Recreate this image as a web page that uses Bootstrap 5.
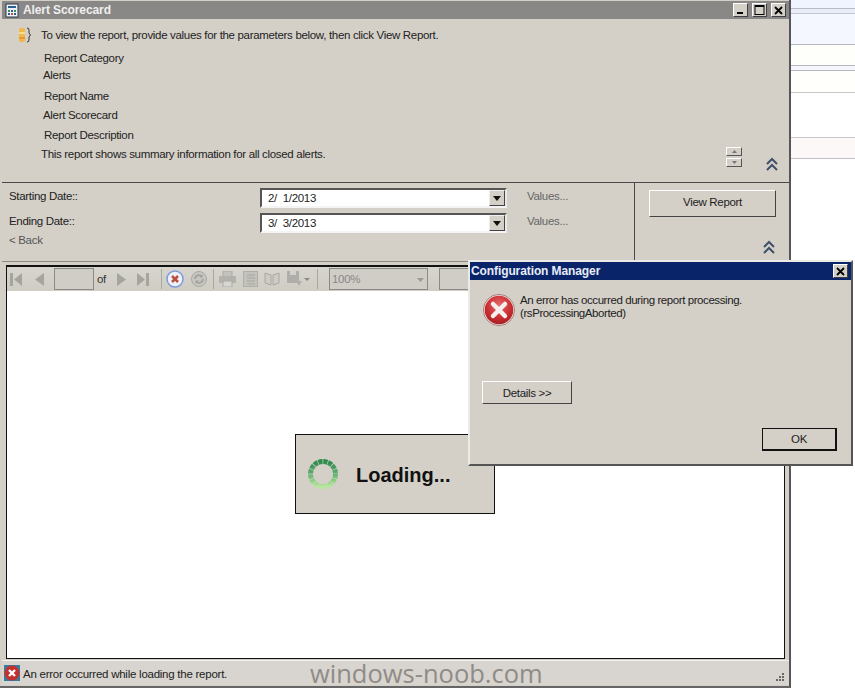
<!DOCTYPE html>
<html lang="en">
<head>
<meta charset="utf-8">
<title>Alert Scorecard</title>
<link href="https://cdn.jsdelivr.net/npm/bootstrap@5.3.0/dist/css/bootstrap.min.css" rel="stylesheet">
<style>
html,body{margin:0;height:689px;overflow:hidden;background:#fff}
body{font-family:"Liberation Sans",Arial,sans-serif;font-size:11.5px;letter-spacing:-.32px;line-height:16px;color:#222}
.stage{position:relative;width:855px;height:689px;overflow:hidden}
.appwin{width:791px;height:688px;background:#d4d0c8;border-right:2px solid #55565a;border-bottom:2px solid #666;padding-left:2px}
.strip{flex:1 1 auto;background:#fff}
.s-a{height:9px;background:#f0f4ff;border-bottom:1px solid #b9bcc4}
.s-b{height:5px;background:#e9edf8;border-bottom:1px solid #c3c6ce}
.s-c{height:31px;background:#f4f7ff;border-bottom:1px solid #b5b8bf}
.s-d{height:21px;background:#fefefb;border-bottom:1px solid #b5b8bf}
.s-e{height:5px;background:#f6f6fc;border-bottom:1px solid #b5b8bf}
.s-f{height:22px;background:#fffffb;border-bottom:1px solid #c8c8cc}
.s-g{height:45px;background:#fff;border-bottom:1px solid #c8c8cc}
.s-h{height:21px;background:#fcf8f8;border-bottom:1px solid #c0c0c6}
.titlebar{height:18px;margin-top:1px;background:#8a8887;color:#eee;font-weight:700;font-size:12px;letter-spacing:-.1px;padding:0 3px 0 3px}
.titletxt{margin-left:3px}
.capbtn{width:15px;height:14px;background:#d4d0c8;border:1px solid;border-color:#fff #404040 #404040 #fff;display:flex;align-items:center;justify-content:center}
.infopanel{height:164px;border-bottom:1px solid #4a4a48;padding-top:8px}
.ln1{margin-left:39px;height:16px;white-space:nowrap}
.ln2{margin-left:42px;height:16px}
.ln3{margin-left:41px;height:16px}
.m7{margin-top:7px}.m1{margin-top:1px}.m5{margin-top:5px}.m3{margin-top:3px}.m4{margin-top:4px}
.infoicon{margin-left:16px;margin-right:7px;vertical-align:top}
.ln1.first{margin-left:0}
.spins{margin-right:24px;margin-top:120px;width:16px}
.spinbtn{display:flex;height:9px;background:#d4d0c8;border:1px solid;border-color:#fff #555 #555 #fff;align-items:center;justify-content:center;margin-bottom:2px}
.chev1{margin-top:130px;margin-right:11px}
.parampanel{height:79px;border-bottom:1px solid #8c8a84}
.paramleft{width:633px;border-right:1px solid #4a4a48;padding:5px 0 0 7px}
.paramrow{height:25px;align-items:flex-start}
.plabel{width:251px}
.dateinput{width:247px;height:20px;background:#fff;border:2px solid;border-color:#555 #e8e8e8 #f4f4f4 #555;padding:0 0 0 6px;position:relative;display:flex;justify-content:space-between;margin-right:20px}
.drop{width:16px;height:16px;background:#d4d0c8;border:1px solid;border-color:#eee #444 #444 #eee;display:flex;align-items:center;justify-content:center;flex:none}
.vals{color:#666}
.back{color:#555;margin-top:-6px}
.paramright{flex:1 1 auto;padding:7px 0 0 14px}
.winbtn{width:127px;height:27px;background:#d4d0c8;border:1px solid;border-color:#fff #444 #444 #fff;line-height:22px;text-align:center;color:#222}
.chev2{margin:23px 0 0 114px;display:block}
.frame{height:394px;margin:3px 4px 0 4px;border:1px solid #111;border-width:2px 1px 1px 1px;background:#fff;display:flex;flex-direction:column}
.tbar{height:24px;background:linear-gradient(#d8d5ce,#cfccc4);display:flex;align-items:center;flex:none;color:#333;padding-left:3px}
.tbar svg{flex:none}
.pg{width:40px;height:22px;background:#d0cdc6;border:1px solid #8a8a86;margin-left:10px}
.ofw{margin-left:3px;width:10px}
.sep{width:1px;height:20px;background:#aaa8a2;flex:none}
.g{margin-left:7px}.g2{margin-left:4px}.g3{margin-left:10px}.g4{margin-left:12px}.g1{margin-left:1px}.g5{margin-left:5px}.g6{margin-left:6px}
.zoomsel{width:99px;height:22px;border:1px solid #8a8a86;background:#d0cdc6;color:#888;padding:2px 0 0 2px;display:flex;justify-content:space-between;margin-left:11px}
.zoomsel svg{margin:7px 3px 0 0}
.findbox{width:60px;height:22px;border:1px solid #8a8a86;background:#d0cdc6;margin-left:11px}
.viewer{flex:1 1 auto;background:#fff}
.statusbar{height:25px;margin-top:1px;border-top:1px solid #f2f0ec;background:#d8d4cf;position:relative;padding-left:2px;color:#222;white-space:nowrap;align-items:center}
.statustxt{margin-left:3px;padding-top:2px;letter-spacing:-.25px}
.wmark{font-family:"Open Sans","Noto Sans",sans-serif;font-size:25.5px;letter-spacing:0;line-height:24px;color:#8f8b86;margin-left:83px}
.grip{margin-left:auto;margin-right:4px;margin-top:8px}
.dialog{position:absolute;left:468px;top:260px;width:385px;height:206px;background:#d4d0c8;border:2px solid;border-color:#eceae6 #555 #555 #eceae6;z-index:2}
.dtitle{height:18px;background:#0a246a;color:#e8ecf8;font-weight:700;font-size:12px;line-height:18px;padding-left:1px;letter-spacing:-.1px;position:relative}
.dclose{position:absolute;right:3px;top:2px;width:15px;height:14px;background:#d4d0c8;border:1px solid;border-color:#fff #404040 #404040 #fff;display:flex;align-items:center;justify-content:center}
.dbody{padding:14px 0 0 13px}
.dmsg{margin-left:5px;line-height:13px;color:#222;letter-spacing:-.42px}
.detbtn{width:90px;height:23px;margin-top:55px;background:#d4d0c8;border:1px solid;border-color:#fff #444 #444 #fff;line-height:23px;text-align:center;margin-left:-1px}
.okbtn{width:75px;height:23px;margin:24px 0 0 279px;background:#d4d0c8;border:1px solid #111;border-right-width:2px;border-bottom-width:2px;line-height:21px;text-align:center}
.loadingbox{position:absolute;left:295px;top:434px;width:200px;height:80px;background:#d4d0c8;border:1px solid #111;padding-left:10px;z-index:1}
.loadtxt{font-size:20px;font-weight:700;letter-spacing:0;color:#111;margin-left:16px;line-height:24px;padding-top:2px}
</style>
</head>
<body>
<div class="stage d-flex">
  <div class="appwin">
    <div class="titlebar d-flex align-items-center">
      <svg width="15" height="15" viewBox="0 0 15 15"><rect x="1" y="1" width="12" height="13" fill="#eef2f6" stroke="#2c3a4a"/><rect x="3" y="3" width="8" height="2" fill="#2b5f8f"/><rect x="3" y="7" width="2" height="2" fill="#3a8a5a"/><rect x="6" y="7" width="2" height="2" fill="#2b5f8f"/><rect x="9" y="7" width="2" height="2" fill="#3a8a5a"/><rect x="3" y="10" width="2" height="2" fill="#2b5f8f"/><rect x="6" y="10" width="2" height="2" fill="#c05040"/><rect x="9" y="10" width="2" height="2" fill="#2b5f8f"/></svg>
      <span class="titletxt flex-grow-1">Alert Scorecard</span>
      <div class="d-flex gap-1 me-0">
        <span class="capbtn"><svg width="9" height="9" viewBox="0 0 9 9"><rect x="1" y="6" width="6" height="2" fill="#000"/></svg></span>
        <span class="capbtn"><svg width="11" height="10" viewBox="0 0 11 10"><rect x="1" y=".5" width="9" height="9" fill="none" stroke="#000"/><rect x="1" y="0" width="9" height="2" fill="#000"/></svg></span>
        <span class="capbtn"><svg width="9" height="9" viewBox="0 0 9 9"><path d="M1 1l7 7M8 1L1 8" stroke="#000" stroke-width="1.8"/></svg></span>
      </div>
    </div>
    <div class="infopanel d-flex">
      <div class="flex-grow-1">
        <div class="ln1 first"><svg class="infoicon" width="16" height="16" viewBox="0 0 16 16"><rect x="1" y="1" width="6" height="14" rx="2" fill="#f0b84a"/><rect x="1" y="5" width="6" height="2" fill="#f7dc90"/><rect x="1" y="10" width="6" height="2" fill="#e89a30"/><path d="M9 1q2 0 2 2v3l1.500 2-1.500 2v3q0 2-2 2" fill="none" stroke="#333"/></svg>To view the report, provide values for the parameters below, then click View Report.</div>
        <div class="ln2 m7">Report Category</div>
        <div class="ln3 m1">Alerts</div>
        <div class="ln2 m5">Report Name</div>
        <div class="ln3 m3">Alert Scorecard</div>
        <div class="ln2 m4">Report Description</div>
        <div class="ln1 m3">This report shows summary information for all closed alerts.</div>
      </div>
      <div class="spins">
        <span class="spinbtn"><svg width="5" height="3" viewBox="0 0 5 3"><path d="M2.500 0L5 3H0z" fill="#777"/></svg></span>
        <span class="spinbtn"><svg width="5" height="3" viewBox="0 0 5 3"><path d="M0 0h5L2.500 3z" fill="#777"/></svg></span>
      </div>
      <svg class="chev1" width="12" height="14" viewBox="0 0 12 14"><path d="M1 7l5-5 5 5M1 13l5-5 5 5" fill="none" stroke="#3f5068" stroke-width="2"/></svg>
    </div>
    <div class="parampanel d-flex">
      <div class="paramleft">
        <div class="paramrow d-flex">
          <div class="plabel">Starting Date::</div>
          <div class="dateinput"><span>2/&nbsp; 1/2013</span><span class="drop"><svg width="8" height="5" viewBox="0 0 8 5"><path d="M0 0h8L4 5z" fill="#111"/></svg></span></div>
          <div class="vals">Values...</div>
        </div>
        <div class="paramrow d-flex">
          <div class="plabel">Ending Date::</div>
          <div class="dateinput"><span>3/&nbsp; 3/2013</span><span class="drop"><svg width="8" height="5" viewBox="0 0 8 5"><path d="M0 0h8L4 5z" fill="#111"/></svg></span></div>
          <div class="vals">Values...</div>
        </div>
        <div class="back">&lt; Back</div>
      </div>
      <div class="paramright">
        <div class="winbtn">View Report</div>
        <svg class="chev2" width="12" height="14" viewBox="0 0 12 14"><path d="M1 7l5-5 5 5M1 13l5-5 5 5" fill="none" stroke="#3f5068" stroke-width="2"/></svg>
      </div>
    </div>
    <div class="frame">
      <div class="tbar">
        <svg width="13" height="13" viewBox="0 0 13 13"><rect x="0" y="0" width="3" height="13" fill="#a5a5a0"/><path d="M12 0v13L4 6.500z" fill="#a5a5a0"/></svg>
        <svg class="g4" width="9" height="13" viewBox="0 0 9 13"><path d="M9 0v13L0 6.500z" fill="#a5a5a0"/></svg>
        <span class="pg"></span>
        <span class="ofw">of</span>
        <svg class="g3" width="9" height="13" viewBox="0 0 9 13"><path d="M0 0v13L9 6.500z" fill="#a5a5a0"/></svg>
        <svg class="g3" width="13" height="13" viewBox="0 0 13 13"><rect x="10" y="0" width="3" height="13" fill="#a5a5a0"/><path d="M1 0v13L9 6.500z" fill="#a5a5a0"/></svg>
        <span class="sep g4"></span>
        <svg class="g2" width="18" height="18" viewBox="0 0 18 18"><circle cx="9" cy="9" r="8" fill="#eef1f8" stroke="#7d9bd8" stroke-width="1.500"/><path d="M6 6l6 6M12 6l-6 6" stroke="#b8503c" stroke-width="2.500"/></svg>
        <svg class="g" width="16" height="16" viewBox="0 0 16 16"><circle cx="8" cy="8" r="7.500" fill="#c8c6c0" stroke="#aaa8a2"/><path d="M4 8a4 4 0 0 1 7-2.500M12 8a4 4 0 0 1-7 2.500" fill="none" stroke="#a4a29c" stroke-width="1.800"/><path d="M11.500 3v3.500H8M4.500 13V9.500H8" fill="#a4a29c"/></svg>
        <span class="sep g6"></span>
        <svg class="g5" width="17" height="16" viewBox="0 0 17 16"><rect x="4" y="0" width="9" height="6" fill="#c4c2bd" stroke="#aaa"/><rect x="0" y="5" width="17" height="7" fill="#b4b2ac"/><rect x="4" y="10" width="9" height="6" fill="#d8d6d0" stroke="#aaa"/></svg>
        <svg class="g" width="15" height="16" viewBox="0 0 15 16"><rect x=".5" y=".5" width="14" height="15" fill="#c4c2bd" stroke="#b0aea8"/><path d="M4 4h8M4 7h8M4 10h8M4 13h8" stroke="#a8a6a0"/></svg>
        <svg class="g6" width="16" height="14" viewBox="0 0 16 14"><path d="M1 1l6 2v10l-6-2zM15 1L9 3v10l6-2z" fill="#cdcbc5" stroke="#aaa8a2"/></svg>
        <svg class="g" width="16" height="16" viewBox="0 0 16 16"><rect x="0" y="0" width="12" height="12" fill="#b0aeaa"/><rect x="3" y="0" width="6" height="4" fill="#d4d2cc"/><path d="M9 10l6 0-3 5z" fill="#b0aeaa"/></svg>
        <svg class="g1" width="6" height="3" viewBox="0 0 6 3"><path d="M0 0h6L3 3z" fill="#888"/></svg>
        <span class="sep g"></span>
        <span class="zoomsel g3">100%<svg width="7" height="4" viewBox="0 0 7 4"><path d="M0 0h7L3.500 4z" fill="#999"/></svg></span>
        <span class="findbox"></span>
      </div>
      <div class="viewer"></div>
    </div>
    <div class="statusbar d-flex">
      <svg width="16" height="16" viewBox="0 0 16 16"><rect width="16" height="16" fill="#3a7a9a"/><circle cx="8" cy="8" r="7.500" fill="#c43030"/><path d="M5 5l6 6M11 5l-6 6" stroke="#fff" stroke-width="2.400"/></svg>
      <span class="statustxt">An error occurred while loading the report.</span>
      <span class="wmark">windows-noob.com</span>
      <svg class="grip" width="11" height="11" viewBox="0 0 11 11"><path d="M8 1h2v2H8zM5 4h2v2H5zM8 4h2v2H8zM2 7h2v2H2zM5 7h2v2H5zM8 7h2v2H8z" fill="#6a6864"/></svg>
    </div>
  </div>
  <div class="strip">
    <div class="s-a"></div><div class="s-b"></div><div class="s-c"></div><div class="s-d"></div><div class="s-e"></div><div class="s-f"></div><div class="s-g"></div><div class="s-h"></div>
  </div>

  <div class="loadingbox d-flex align-items-center">
    <svg width="34" height="34" viewBox="0 0 34 34"><defs><linearGradient id="ringg" x1="0" y1="0" x2="0" y2="1"><stop offset="0" stop-color="#2f8a4e"/><stop offset=".5" stop-color="#62b070"/><stop offset="1" stop-color="#b4e898"/></linearGradient></defs><circle cx="17" cy="17" r="12.500" fill="none" stroke="url(#ringg)" stroke-width="5" stroke-dasharray="4.200 .7"/></svg>
    <span class="loadtxt">Loading...</span>
  </div>

  <div class="dialog">
    <div class="dtitle">Configuration Manager
      <span class="dclose"><svg width="9" height="9" viewBox="0 0 9 9"><path d="M1 1l7 7M8 1L1 8" stroke="#000" stroke-width="1.800"/></svg></span>
    </div>
    <div class="dbody">
      <div class="d-flex">
        <svg width="32" height="32" viewBox="0 0 32 32"><defs><radialGradient id="redg" cx=".5" cy=".35" r=".7"><stop offset="0" stop-color="#e86a6a"/><stop offset=".6" stop-color="#c82c30"/><stop offset="1" stop-color="#9a1c20"/></radialGradient></defs><circle cx="16" cy="16" r="15" fill="url(#redg)" stroke="#f0dcd8" stroke-width="1.500"/><circle cx="16" cy="16" r="15.600" fill="none" stroke="#8a5a58" stroke-width=".7"/><path d="M10 10l12 12M22 10L10 22" stroke="#f4f0ee" stroke-width="4.500" stroke-linecap="round"/></svg>
        <div class="dmsg">An error has occurred during report processing.<br>(rsProcessingAborted)</div>
      </div>
      <div class="detbtn">Details &gt;&gt;</div>
      <div class="okbtn">OK</div>
    </div>
  </div>
</div>
<script src="https://cdn.jsdelivr.net/npm/bootstrap@5.3.0/dist/js/bootstrap.bundle.min.js"></script>
</body>
</html>
